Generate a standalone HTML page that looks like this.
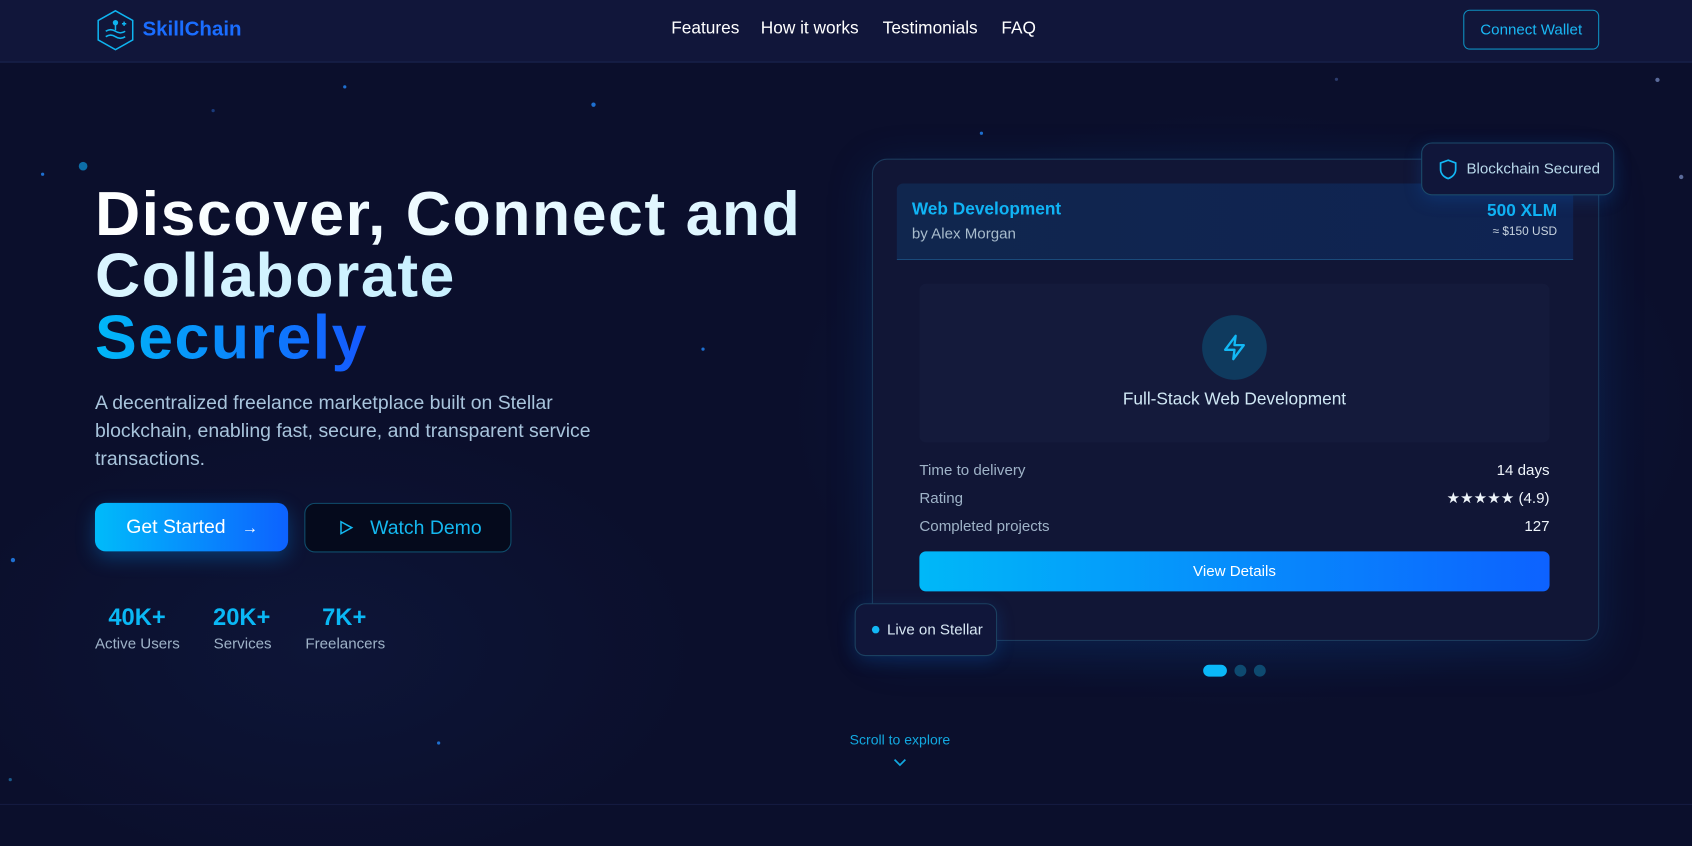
<!DOCTYPE html>
<html><head><meta charset="utf-8">
<style>
*{margin:0;padding:0;box-sizing:border-box}
html,body{width:1692px;height:846px;overflow:hidden;background:#0b0f2c}
#w{width:1568px;height:784px;transform:scale(1.07908);transform-origin:0 0;position:relative;font-family:"Liberation Sans",sans-serif;
background:radial-gradient(ellipse 600px 400px at 1150px 380px,rgba(20,50,110,.35),transparent 70%),radial-gradient(ellipse 500px 300px at 300px 600px,rgba(20,40,90,.25),transparent 70%),#0b0f2c;overflow:hidden}
.a{position:absolute}
nav{position:absolute;left:0;top:0;width:1568px;height:58px;background:#11163a;border-bottom:1px solid #1a2550}
.nl{position:absolute;top:18px;color:#fff;font-size:16px;font-weight:500}
.star{position:absolute;border-radius:50%;background:#1e6fd0}
h1{position:absolute;left:88px;top:170px;font-size:58px;line-height:57px;font-weight:700;letter-spacing:1.4px}
.g1{background:linear-gradient(90deg,#fff,#c8f0ff);-webkit-background-clip:text;background-clip:text;color:transparent}
.g2{background:linear-gradient(90deg,#00b8f8,#1558ff);-webkit-background-clip:text;background-clip:text;color:transparent}
.row{position:absolute;left:852px;width:584px;font-size:14px;color:#9fb3c8}
.row span{float:right;color:#eef4fa}
</style></head><body><div id="w">
<div class="star" style="left:73px;top:150px;width:8px;height:8px;background:#0d6ea8"></div>
<div class="star" style="left:548px;top:95px;width:4px;height:4px"></div>
<div class="star" style="left:196px;top:101px;width:3px;height:3px;background:#1a3a7a"></div>
<div class="star" style="left:908px;top:122px;width:3px;height:3px"></div>
<div class="star" style="left:1534px;top:72px;width:4px;height:4px;background:#5a6a9a"></div>
<div class="star" style="left:1556px;top:162px;width:4px;height:4px;background:#5a6a9a"></div>
<div class="star" style="left:10px;top:517px;width:4px;height:4px"></div>
<div class="star" style="left:650px;top:322px;width:3px;height:3px"></div>
<div class="star" style="left:405px;top:687px;width:3px;height:3px"></div>
<div class="star" style="left:38px;top:160px;width:3px;height:3px"></div>
<div class="star" style="left:1237px;top:72px;width:3px;height:3px;background:#2a3a6a"></div>
<div class="star" style="left:8px;top:721px;width:3px;height:3px;background:#1a5a8a"></div>
<div class="star" style="left:318px;top:79px;width:3px;height:3px"></div>
<nav>
<svg class="a" style="left:89px;top:9px" width="36" height="38" viewBox="0 0 36 38" fill="none" stroke="#0fb4f0" stroke-width="1.4"><path d="M18 1 L34 10 V28 L18 37 L2 28 V10 Z"/><circle cx="18" cy="12" r="1.8" fill="#0fb4f0"/><path d="M18 13v6M26 11v4M24 13h4"/><path d="M9 20q4.5-3 9 0t9 0M9 25q4.5-3 9 0t9 0"/></svg>
<div class="a" style="left:132px;top:17px;font-size:19px;font-weight:700;color:#1a6dff">SkillChain</div>
<div class="nl" style="left:622px">Features</div>
<div class="nl" style="left:705px">How it works</div>
<div class="nl" style="left:818px">Testimonials</div>
<div class="nl" style="left:928px">FAQ</div>
<div class="a" style="left:1356px;top:9px;width:126px;height:37px;border:1px solid #0e8fc0;border-radius:6px;color:#1ab8f5;font-size:14px;text-align:center;line-height:35px;font-weight:500">Connect Wallet</div>
</nav>
<h1><span class="g1">Discover, Connect and<br>Collaborate</span><br><span class="g2">Securely</span></h1>
<div class="a" style="left:88px;top:360px;width:470px;font-size:18px;line-height:26px;color:#a8c4dc">A decentralized freelance marketplace built on Stellar blockchain, enabling fast, secure, and transparent service transactions.</div>
<div class="a" style="left:88px;top:466px;width:179px;height:45px;border-radius:10px;background:linear-gradient(90deg,#00bbfa,#0d62ff);box-shadow:0 6px 18px rgba(0,150,255,.3);color:#fff;font-size:18px;font-weight:500;line-height:45px;padding-left:29px">Get Started <span style="margin-left:10px;font-size:15px">→</span></div>
<div class="a" style="left:282px;top:466px;width:192px;height:46px;border-radius:10px;background:#050a1c;border:1px solid #0f4d6c;color:#14b8f0;font-size:18px;line-height:44px;padding-left:60px">Watch Demo</div>
<svg class="a" style="left:314px;top:482px" width="14" height="14" viewBox="0 0 14 14" fill="none" stroke="#14b8f0" stroke-width="1.4"><path d="M2 1.5 L12 7 L2 12.5 Z"/></svg>
<div class="a" style="left:88px;top:559px;width:78px;text-align:center;color:#0ab8f5;font-size:22px;font-weight:700">40K+</div>
<div class="a" style="left:88px;top:588px;color:#9fb3c8;font-size:14px">Active Users</div>
<div class="a" style="left:194px;top:559px;width:60px;text-align:center;color:#0ab8f5;font-size:22px;font-weight:700">20K+</div>
<div class="a" style="left:198px;top:588px;color:#9fb3c8;font-size:14px">Services</div>
<div class="a" style="left:283px;top:559px;width:72px;text-align:center;color:#0ab8f5;font-size:22px;font-weight:700">7K+</div>
<div class="a" style="left:283px;top:588px;color:#9fb3c8;font-size:14px">Freelancers</div>

<div class="a" style="left:808px;top:147px;width:674px;height:447px;border-radius:14px;background:#111636;border:1px solid #1b3a5c;box-shadow:0 10px 40px rgba(10,80,160,.25)"></div>
<div class="a" style="left:831px;top:170px;width:627px;height:71px;background:linear-gradient(90deg,#10264e,#0f2352);border-bottom:1px solid #1a4a7a;border-radius:6px 6px 0 0"></div>
<div class="a" style="left:845px;top:186px;color:#10b4f5;font-size:16px;font-weight:700">Web Development</div>
<div class="a" style="left:845px;top:208px;color:#a8bccc;font-size:14px">by Alex Morgan</div>
<div class="a" style="left:1300px;top:187px;width:143px;text-align:right;color:#10b4f5;font-size:16px;font-weight:700">500 XLM</div>
<div class="a" style="left:1300px;top:209px;width:143px;text-align:right;color:#c8d4e0;font-size:11px">≈ $150 USD</div>
<div class="a" style="left:852px;top:263px;width:584px;height:147px;background:#141a3b;border-radius:6px"></div>
<div class="a" style="left:1114px;top:292px;width:60px;height:60px;border-radius:50%;background:#0f3a5e"></div>
<svg class="a" style="left:1131px;top:309px" width="26" height="26" viewBox="0 0 24 24" fill="none" stroke="#12b8f5" stroke-width="2" stroke-linejoin="round"><path d="M13 2 L4 14 H12 L11 22 L20 10 H12 Z"/></svg>
<div class="a" style="left:852px;top:362px;width:584px;text-align:center;color:#d0e8f5;font-size:16px">Full-Stack Web Development</div>
<div class="row" style="top:427px">Time to delivery<span>14 days</span></div>
<div class="row" style="top:453px">Rating<span>★★★★★ (4.9)</span></div>
<div class="row" style="top:479px">Completed projects<span>127</span></div>
<div class="a" style="left:852px;top:511px;width:584px;height:37px;border-radius:6px;background:linear-gradient(90deg,#00b8f8,#0d62ff);color:#fff;font-size:14px;font-weight:500;text-align:center;line-height:37px">View Details</div>
<div class="a" style="left:1317px;top:132px;width:179px;height:49px;border-radius:10px;background:#10163a;border:1px solid #1b4a6a;box-shadow:0 4px 16px rgba(10,100,200,.25);color:#b8d8ea;font-size:14px;line-height:47px;padding-left:41px">Blockchain Secured</div>
<svg class="a" style="left:1333px;top:147px" width="18" height="20" viewBox="0 0 18 20" fill="none" stroke="#12b8f5" stroke-width="1.6"><path d="M9 1.5 L16 4 V10 C16 14 13 17 9 18.5 C5 17 2 14 2 10 V4 Z"/></svg>
<div class="a" style="left:792px;top:559px;width:132px;height:49px;border-radius:10px;background:#10163a;border:1px solid #1b4060;box-shadow:0 4px 16px rgba(10,100,200,.25);color:#d8e8f4;font-size:14px;line-height:47px;padding-left:29px">Live on Stellar</div>
<div class="a" style="left:808px;top:580px;width:7px;height:7px;border-radius:50%;background:#12b8f5"></div>
<div class="a" style="left:1115px;top:616px;width:22px;height:11px;border-radius:6px;background:#0ab8f8"></div>
<div class="a" style="left:1144px;top:616px;width:11px;height:11px;border-radius:50%;background:#0e4a70"></div>
<div class="a" style="left:1162px;top:616px;width:11px;height:11px;border-radius:50%;background:#0e4a70"></div>
<div class="a" style="left:734px;top:678px;width:200px;text-align:center;color:#12a8e0;font-size:13px">Scroll to explore</div>
<svg class="a" style="left:828px;top:703px" width="12" height="8" viewBox="0 0 12 8" fill="none" stroke="#12a8e0" stroke-width="1.6"><path d="M1 1 L6 6 L11 1"/></svg>
<div class="a" style="left:0;top:745px;width:1568px;height:1px;background:#141b40"></div>
</div></body></html>
